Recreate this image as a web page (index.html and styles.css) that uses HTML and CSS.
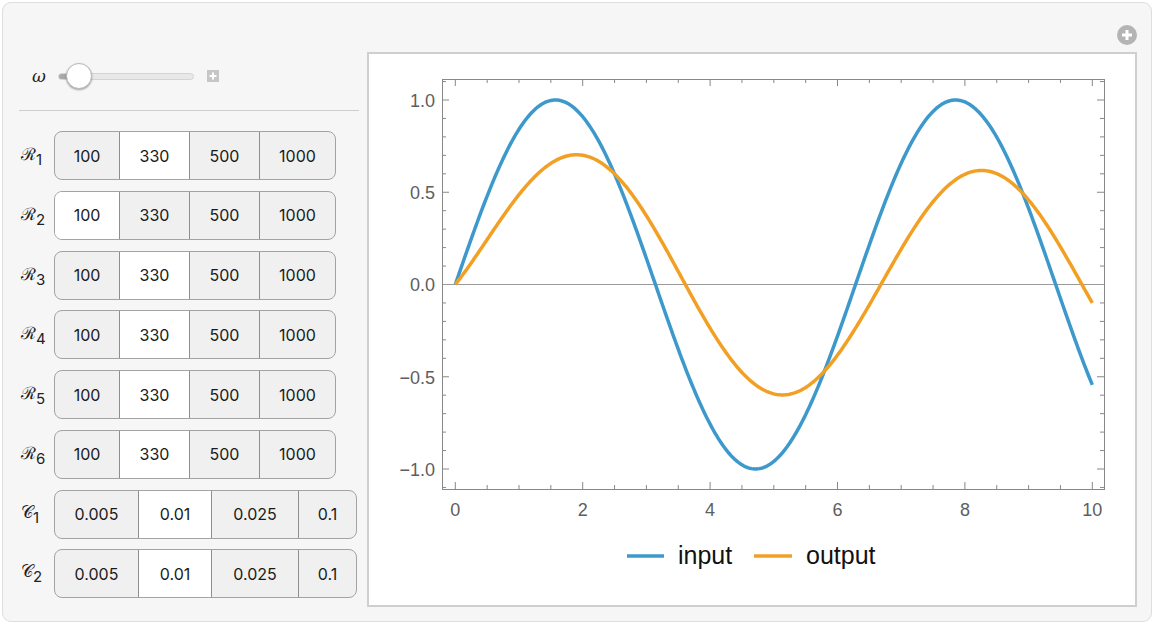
FILE: index.html
```html
<!DOCTYPE html>
<html lang="en">
<head>
    <meta charset="UTF-8">
    <meta name="viewport" content="width=device-width, initial-scale=1.0">
    <title>Filter Response</title>
    <link rel="stylesheet" href="styles.css">
</head>
<body>
    <div class="panel">
        <svg class="corner-plus" width="20" height="20" viewBox="0 0 20 20">
            <circle cx="10" cy="10" r="10" fill="#b4b4b4"/>
            <path d="M10 5v10M5 10h10" stroke="#fff" stroke-width="3"/>
        </svg>

        <div class="controls">
            <div class="slider-row">
                <span class="var">ω</span>
                <div class="slider">
                    <div class="fill"></div>
                    <div class="thumb"></div>
                </div>
                <svg class="mini-plus" width="12" height="12" viewBox="0 0 12 12">
                    <rect width="12" height="12" fill="#c6c6c6"/>
                    <path d="M6 2.5v7M2.5 6h7" stroke="#fff" stroke-width="2"/>
                </svg>
            </div>

            <div class="sep"></div>

            <div class="setters">
                <div class="setter-row">
                    <span class="lbl">ℛ<sub>1</sub></span>
                    <div class="seg res">
                        <span>100</span><span class="on">330</span><span>500</span><span>1000</span>
                    </div>
                </div>
                <div class="setter-row">
                    <span class="lbl">ℛ<sub>2</sub></span>
                    <div class="seg res">
                        <span class="on">100</span><span>330</span><span>500</span><span>1000</span>
                    </div>
                </div>
                <div class="setter-row">
                    <span class="lbl">ℛ<sub>3</sub></span>
                    <div class="seg res">
                        <span>100</span><span class="on">330</span><span>500</span><span>1000</span>
                    </div>
                </div>
                <div class="setter-row">
                    <span class="lbl">ℛ<sub>4</sub></span>
                    <div class="seg res">
                        <span>100</span><span class="on">330</span><span>500</span><span>1000</span>
                    </div>
                </div>
                <div class="setter-row">
                    <span class="lbl">ℛ<sub>5</sub></span>
                    <div class="seg res">
                        <span>100</span><span class="on">330</span><span>500</span><span>1000</span>
                    </div>
                </div>
                <div class="setter-row">
                    <span class="lbl">ℛ<sub>6</sub></span>
                    <div class="seg res">
                        <span>100</span><span class="on">330</span><span>500</span><span>1000</span>
                    </div>
                </div>
                <div class="setter-row">
                    <span class="lbl">𝒞<sub>1</sub></span>
                    <div class="seg cap">
                        <span>0.005</span><span class="on">0.01</span><span>0.025</span><span>0.1</span>
                    </div>
                </div>
                <div class="setter-row">
                    <span class="lbl">𝒞<sub>2</sub></span>
                    <div class="seg cap">
                        <span>0.005</span><span class="on">0.01</span><span>0.025</span><span>0.1</span>
                    </div>
                </div>
            </div>
        </div>

        <div class="plot">
            <svg id="chart" width="766" height="551" viewBox="368 53 766 551">
                <g id="ticks" stroke="#888" stroke-width="1"></g>
                <line x1="441" y1="283.5" x2="1103" y2="283.5" stroke="#9a9a9a" stroke-width="1"/>
                <rect x="441.5" y="78.5" width="662" height="410" fill="none" stroke="#888" stroke-width="1"/>
                <path id="input" fill="none" stroke="#3d99cc" stroke-width="3.5" stroke-linejoin="round"/>
                <path id="output" fill="none" stroke="#f2a024" stroke-width="3.5" stroke-linejoin="round"/>

                <g class="ylab" text-anchor="end">
                    <text x="434" y="105.5">1.0</text>
                    <text x="434" y="197.5">0.5</text>
                    <text x="434" y="290">0.0</text>
                    <text x="434" y="382.5">−0.5</text>
                    <text x="434" y="474.5">−1.0</text>
                </g>
                <g class="xlab" text-anchor="middle">
                    <text x="454.3" y="514.5">0</text>
                    <text x="581.7" y="514.5">2</text>
                    <text x="709.1" y="514.5">4</text>
                    <text x="836.5" y="514.5">6</text>
                    <text x="963.9" y="514.5">8</text>
                    <text x="1091.3" y="514.5">10</text>
                </g>

                <line x1="626" y1="555" x2="663" y2="555" stroke="#3d99cc" stroke-width="3.5"/>
                <text class="legend" x="677" y="563">input</text>
                <line x1="753" y1="555" x2="791" y2="555" stroke="#f2a024" stroke-width="3.5"/>
                <text class="legend" x="805" y="563">output</text>
            </svg>
        </div>
    </div>
    <script src="plot.js"></script>
</body>
</html>
```

FILE: styles.css
```css
* {
    box-sizing: border-box;
}

body {
    margin: 0;
    padding: 2px;
    background-color: #fff;
    font-family: Inter, "Noto Sans", sans-serif;
    color: #222;
}

.panel {
    position: relative;
    width: 1150px;
    height: 620px;
    display: flex;
    gap: 8px;
    padding: 49px 16px 16px 16px;
    background-color: #f6f6f6;
    border: 1px solid #dedede;
    border-radius: 9px;
}

.corner-plus {
    position: absolute;
    top: 22px;
    right: 14px;
}

.controls {
    width: 340px;
    flex: none;
    padding-top: 11px;
}

.slider-row {
    display: flex;
    align-items: center;
    height: 26px;
    padding-left: 13px;
}

.var {
    width: 26px;
    font-family: "DejaVu Serif", "Liberation Serif", serif;
    font-style: italic;
    font-size: 17px;
    color: #222;
}

.slider {
    position: relative;
    width: 136px;
    height: 7px;
    background-color: #e8e8e8;
    border: 1px solid #d4d4d4;
    border-radius: 4px;
}

.slider .fill {
    width: 16px;
    height: 100%;
    background-color: #a9a9a9;
    border-radius: 3px 0 0 3px;
}

.thumb {
    position: absolute;
    left: 7px;
    top: -11px;
    width: 26px;
    height: 26px;
    border-radius: 50%;
    background-color: #fff;
    border: 1px solid #b9b9b9;
    box-shadow: 0 1px 2px rgba(0, 0, 0, 0.35);
}

.mini-plus {
    margin-left: 13px;
}

.sep {
    height: 1px;
    margin-top: 21px;
    background-color: #cdcdcd;
}

.setters {
    display: flex;
    flex-direction: column;
    gap: 10.75px;
    margin-top: 20px;
}

.setter-row {
    display: flex;
    align-items: center;
    height: 49px;
}

.lbl {
    width: 35px;
    padding-left: 2px;
    font-family: "DejaVu Serif", "Liberation Serif", serif;
    font-size: 17px;
    color: #222;
}

.lbl sub {
    font-family: Inter, sans-serif;
    font-size: 15px;
    vertical-align: -5px;
}

.seg {
    display: flex;
    height: 49px;
    border: 1px solid #a3a3a3;
    border-radius: 8px;
    overflow: hidden;
    background-color: #f0f0f0;
}

.seg span {
    display: flex;
    align-items: center;
    justify-content: center;
    height: 100%;
    font-size: 16px;
    color: #1a1a1a;
}

.seg span + span {
    border-left: 1px solid #8e8e8e;
}

.seg span.on {
    background-color: #fff;
}

.res span:nth-child(1) { width: 64px; }
.res span:nth-child(2) { width: 70px; }
.res span:nth-child(3) { width: 70px; }
.res span:nth-child(4) { width: 76px; }

.cap span:nth-child(1) { width: 83px; }
.cap span:nth-child(2) { width: 73px; }
.cap span:nth-child(3) { width: 87px; }
.cap span:nth-child(4) { width: 58px; }

.plot {
    width: 770px;
    height: 555px;
    flex: none;
    background-color: #fff;
    border: 2px solid #cfcfcf;
}

.plot svg {
    display: block;
}

.ylab text,
.xlab text {
    font-family: "Liberation Sans", Arial, sans-serif;
    font-size: 18px;
    fill: #5e5e5e;
}

.legend {
    font-family: "Liberation Sans", Arial, sans-serif;
    font-size: 25px;
    fill: #111;
}
```

FILE: plot.js
```js
const X = t => 454.3 + 63.7 * t;
const Y = v => 283.5 - 184.5 * v;
const NS = 'http://www.w3.org/2000/svg';

// steady sine with a lag plus a decaying start
const A = 0.615, phi = 0.41, tau = 1.9;
const B = A * Math.sin(phi);
const out = t => A * Math.sin(t - phi) + B * Math.exp(-t / tau);

function curve(f) {
    let d = '';
    for (let i = 0; i <= 400; i++) {
        const t = i * 10 / 400;
        d += (i ? 'L' : 'M') + X(t).toFixed(2) + ' ' + Y(f(t)).toFixed(2);
    }
    return d;
}

document.getElementById('input').setAttribute('d', curve(Math.sin));
document.getElementById('output').setAttribute('d', curve(out));

const ticks = document.getElementById('ticks');
function tick(x1, y1, x2, y2) {
    const l = document.createElementNS(NS, 'line');
    l.setAttribute('x1', x1); l.setAttribute('y1', y1);
    l.setAttribute('x2', x2); l.setAttribute('y2', y2);
    ticks.appendChild(l);
}

for (let i = 0; i <= 20; i++) {
    const x = X(i / 2);
    const len = i % 4 === 0 ? 7 : 4;
    tick(x, 488, x, 488 - len);
    tick(x, 78, x, 78 + len);
}

for (let i = -11; i <= 11; i++) {
    const y = Y(i / 10);
    const len = i % 5 === 0 ? 7 : 4;
    tick(441, y, 441 + len, y);
    tick(1103, y, 1103 - len, y);
}
```
